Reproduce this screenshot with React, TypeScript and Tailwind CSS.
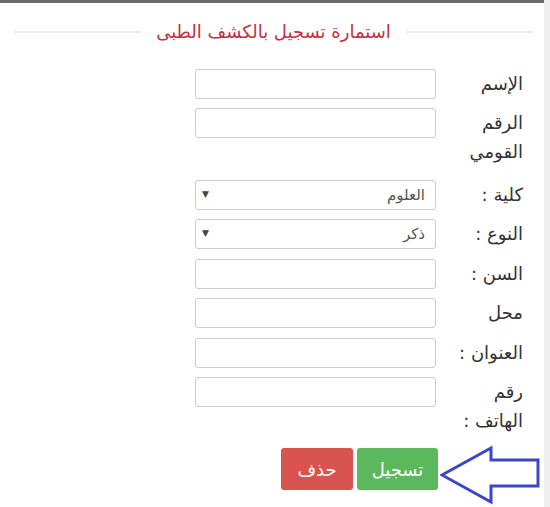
import React from "react";

const font = { fontFamily: '"DejaVu Sans", "Noto Sans", sans-serif' };

function Row({
  label,
  children,
  mb,
}: {
  label: React.ReactNode;
  children: React.ReactNode;
  mb: string;
}) {
  return (
    <div className={`flex items-start ${mb}`}>
      <div className="w-[87px] text-right text-[18px] leading-[29px] text-[#333]">{label}</div>
      {children}
    </div>
  );
}

function TextInput() {
  return <div className="h-[30px] w-[241px] rounded-[3px] border border-[#cccccc] bg-white" />;
}

function SelectBox({ value }: { value: string }) {
  return (
    <div className="flex h-[30px] w-[241px] items-center justify-between rounded-[3px] border border-[#cccccc] bg-white pl-[6px] pr-[10px]">
      <span className="text-[15px] text-[#555]">{value}</span>
      <span className="text-[9px] text-[#444]">▼</span>
    </div>
  );
}

export default function App() {
  return (
    <div className="flex h-[507px] w-[550px] overflow-hidden bg-white" style={font}>
      <div className="relative h-full w-[544px] border-t-[3px] border-[#6b6b6b]">
        <div className="mt-[16px] flex items-center pl-[14px] pr-[11px]">
          <div className="h-[2px] flex-1 bg-[#ececec]" />
          <div className="px-[15px] text-[18px] leading-[26px] text-[#c4303f]" dir="rtl">
            استمارة تسجيل بالكشف الطبى
          </div>
          <div className="h-[2px] flex-1 bg-[#ececec]" />
        </div>

        <div dir="rtl" className="mt-[24px] pr-[21px]">
          <Row label="الإسم" mb="mb-[9px]">
            <TextInput />
          </Row>
          <Row
            label={
              <>
                الرقم
                <br />
                القومي
              </>
            }
            mb="mb-[14px]"
          >
            <TextInput />
          </Row>
          <Row label="كلية :" mb="mb-[9px]">
            <SelectBox value="العلوم" />
          </Row>
          <Row label="النوع :" mb="mb-[10px]">
            <SelectBox value="ذكر" />
          </Row>
          <Row label="السن :" mb="mb-[9px]">
            <TextInput />
          </Row>
          <Row label="محل" mb="mb-[10px]">
            <TextInput />
          </Row>
          <Row label="العنوان :" mb="mb-[9px]">
            <TextInput />
          </Row>
          <Row
            label={
              <>
                رقم
                <br />
                الهاتف :
              </>
            }
            mb="mb-[13px]"
          >
            <TextInput />
          </Row>

          <div className="flex gap-[4px] pr-[85px]">
            <button className="h-[42px] w-[81px] rounded-[3px] bg-[#5cb85c] text-[18px] text-white">
              تسجيل
            </button>
            <button className="h-[42px] w-[72px] rounded-[3px] bg-[#d9534f] text-[18px] text-white">
              حذف
            </button>
          </div>
        </div>

        <svg
          className="absolute left-[440px] top-[441px]"
          width="102"
          height="62"
          viewBox="440 441 102 62"
        >
          <polygon
            points="442,472 491,445 491,457 538,457 538,483 491,483 491,499"
            fill="none"
            stroke="#3a48c6"
            strokeWidth="3"
            strokeLinejoin="miter"
          />
        </svg>
      </div>
      <div className="h-full w-[6px] bg-[#eeeeee]" />
    </div>
  );
}
